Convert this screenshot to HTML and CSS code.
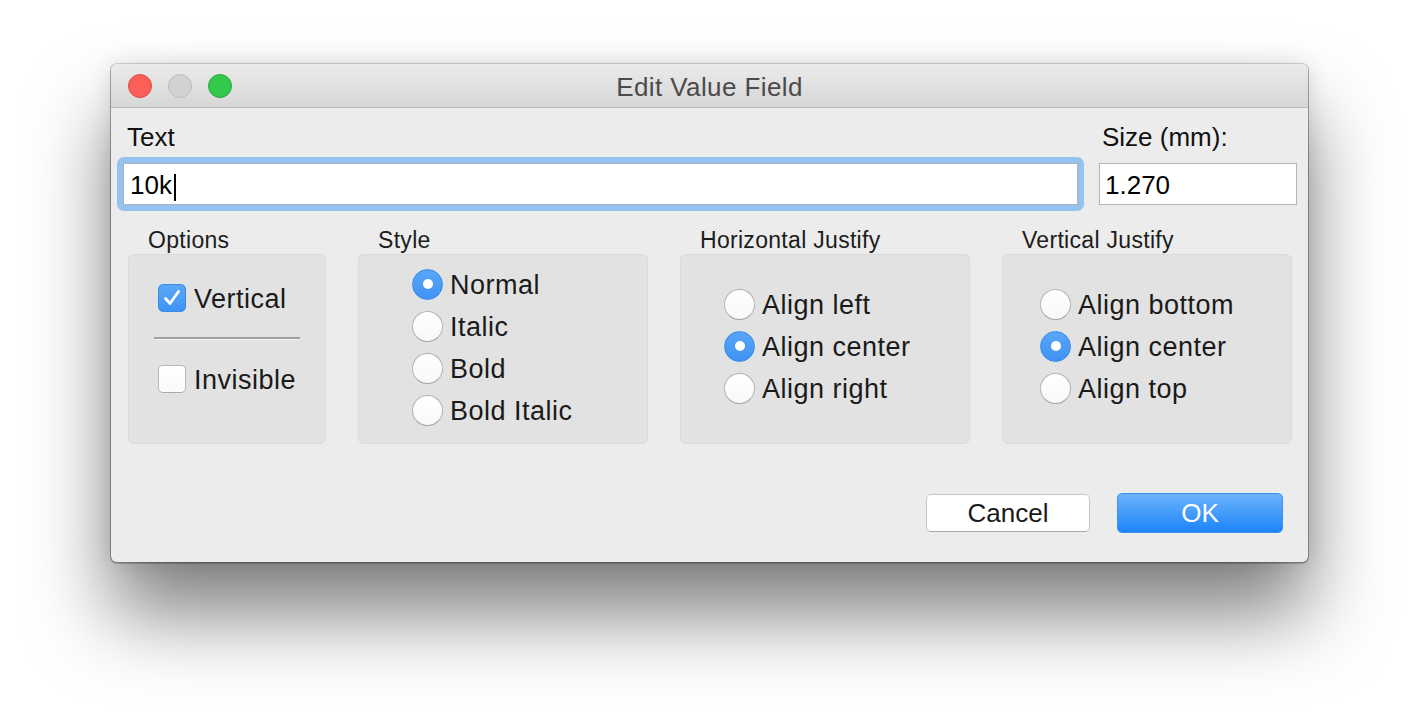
FILE: index.html
```html
<!DOCTYPE html>
<html lang="en">
<head>
<meta charset="utf-8">
<title>Edit Value Field</title>
<link rel="stylesheet" href="styles.css">
</head>
<body>
<div class="stage">
  <div class="window">
    <div class="titlebar">
      <div class="lights">
        <span class="light close"></span>
        <span class="light min"></span>
        <span class="light zoom"></span>
      </div>
      <div class="title">Edit Value Field</div>
      <div></div>
    </div>
    <div class="content">
      <div class="top-row">
        <div class="col-text">
          <div class="label text-label">Text</div>
          <div class="focus-ring">
            <div class="field">10k<span class="caret"></span></div>
          </div>
        </div>
        <div class="col-size">
          <div class="label size-label">Size (mm):</div>
          <div class="field size-field">1.270</div>
        </div>
      </div>

      <div class="groups">
        <div class="group g-options">
          <div class="group-label">Options</div>
          <div class="box">
            <div class="row"><span class="check on"><svg viewBox="0 0 28 28" width="28" height="28"><path d="M7.5 14.5 L12 19.5 L20.5 7.5" fill="none" stroke="#fff" stroke-width="2.8" stroke-linecap="round" stroke-linejoin="round"/></svg></span><span class="opt">Vertical</span></div>
            <div class="sep"></div>
            <div class="row"><span class="check"></span><span class="opt">Invisible</span></div>
          </div>
        </div>
        <div class="group g-style">
          <div class="group-label">Style</div>
          <div class="box">
            <div class="row"><span class="radio on"></span><span class="opt">Normal</span></div>
            <div class="row"><span class="radio"></span><span class="opt">Italic</span></div>
            <div class="row"><span class="radio"></span><span class="opt">Bold</span></div>
            <div class="row"><span class="radio"></span><span class="opt">Bold Italic</span></div>
          </div>
        </div>
        <div class="group g-hjust">
          <div class="group-label">Horizontal Justify</div>
          <div class="box">
            <div class="row"><span class="radio"></span><span class="opt">Align left</span></div>
            <div class="row"><span class="radio on"></span><span class="opt">Align center</span></div>
            <div class="row"><span class="radio"></span><span class="opt">Align right</span></div>
          </div>
        </div>
        <div class="group g-vjust">
          <div class="group-label">Vertical Justify</div>
          <div class="box">
            <div class="row"><span class="radio"></span><span class="opt">Align bottom</span></div>
            <div class="row"><span class="radio on"></span><span class="opt">Align center</span></div>
            <div class="row"><span class="radio"></span><span class="opt">Align top</span></div>
          </div>
        </div>
      </div>

      <div class="buttons">
        <div class="btn cancel">Cancel</div>
        <div class="btn ok">OK</div>
      </div>
    </div>
  </div>
</div>
</body>
</html>
```
FILE: styles.css
```css
html, body {
  margin: 0;
  padding: 0;
  background: #ffffff;
}
body {
  width: 1420px;
  height: 722px;
  overflow: hidden;
  font-family: "Liberation Sans", Arial, Helvetica, sans-serif;
  color: #1c1c1c;
}
.stage {
  padding: 64px 0 0 111px;
}
.window {
  width: 1197px;
  height: 498px;
  box-sizing: border-box;
  background: #ececec;
  border-radius: 6px;
  overflow: hidden;
  box-shadow: 0 0 0 1px rgba(0,0,0,0.16), 0 1px 0 1px rgba(0,0,0,0.18), 0 52px 80px 0 rgba(0,0,0,0.5), 0 0 22px rgba(0,0,0,0.12);
}
.titlebar {
  height: 43px;
  border-bottom: 1px solid #b8b8b8;
  background: linear-gradient(#ebebeb, #d6d6d6);
  display: grid;
  grid-template-columns: 1fr auto 1fr;
  align-items: center;
}
.lights {
  display: flex;
  gap: 16px;
  padding-left: 17px;
}
.light {
  width: 24px;
  height: 24px;
  border-radius: 50%;
  box-sizing: border-box;
}
.light.close { background: #fc5f57; border: 1px solid #e0443e; }
.light.min { background: #d2d2d2; border: 1px solid #bcbcbc; }
.light.zoom { background: #34c84a; border: 1px solid #26a73a; }
.title {
  font-size: 26px;
  letter-spacing: 0.4px;
  color: #4b4b4b;
  line-height: 30px;
  padding-top: 2px;
}

.content {
  padding: 14px 11px 0 6px;
}
.top-row {
  display: flex;
  gap: 15px;
  align-items: flex-start;
}
.col-text { flex: 1; }
.col-size { width: 198px; }
.label {
  font-size: 26px;
  line-height: 30px;
  color: #111;
}
.text-label { padding-left: 10px; }
.size-label { padding-left: 3px; }
.focus-ring {
  margin-top: 5px;
  padding: 6px;
  background: #96c2ef;
  border-radius: 7px;
}
.field {
  height: 42px;
  box-sizing: border-box;
  background: #fff;
  border: 1px solid #a9b4c0;
  font-size: 26px;
  line-height: 37px;
  padding: 3px 0 0 6px;
  color: #000;
  white-space: nowrap;
}
.size-field {
  margin-top: 11px;
  border-color: #b4b4b4;
  padding-left: 5px;
}
.caret {
  display: inline-block;
  width: 2px;
  height: 27px;
  background: #000;
  vertical-align: -7px;
  margin-left: 2px;
}

.groups {
  display: flex;
  gap: 32px;
  margin: 16px 0 0 11px;
}
.group-label {
  font-size: 23px;
  line-height: 26px;
  letter-spacing: 0.3px;
  padding-left: 20px;
  color: #1c1c1c;
}
.box {
  margin-top: 1px;
  height: 190px;
  box-sizing: border-box;
  background: #e2e2e2;
  border: 1px solid #dadada;
  border-radius: 6px;
}
.g-options .box { width: 198px; padding: 22px 0 0 29px; }
.g-style .box { width: 290px; padding: 8px 0 0 53px; }
.g-hjust .box { width: 290px; padding: 28px 0 0 43px; }
.g-vjust .box { width: 290px; padding: 28px 0 0 37px; }

.row {
  height: 42px;
  display: flex;
  align-items: center;
}
.opt {
  font-size: 27px;
  letter-spacing: 0.5px;
  line-height: 42px;
  margin-left: 7px;
  padding-top: 2px;
  color: #1a1a1a;
}
.check + .opt { margin-left: 8px; }
.sep {
  width: 146px;
  height: 2px;
  background: #9f9f9f;
  border-bottom: 1px solid #f4f4f4;
  margin: 18px 0 18px -4px;
}
.check {
  width: 28px;
  height: 28px;
  box-sizing: border-box;
  border-radius: 5px;
  background: linear-gradient(#ffffff, #fafafa);
  border: 1px solid #b9b9b9;
  border-bottom-color: #a9a9a9;
  display: block;
}
.check.on {
  background: linear-gradient(#5aa8f8, #3f93f5);
  border: 1px solid #3a8be8;
}
.check svg { display: block; margin: -1px; }
.radio {
  width: 31px;
  height: 31px;
  box-sizing: border-box;
  border-radius: 50%;
  background: linear-gradient(#ffffff, #f8f8f8);
  border: 1px solid #b4b4b4;
  border-bottom-color: #a4a4a4;
  display: flex;
  align-items: center;
  justify-content: center;
}
.radio.on {
  background: linear-gradient(#58a6f8, #3f93f5);
  border: 1px solid #3a8be8;
}
.radio.on::after {
  content: "";
  width: 10px;
  height: 10px;
  border-radius: 50%;
  background: #fff;
}

.buttons {
  display: flex;
  justify-content: flex-end;
  align-items: center;
  gap: 27px;
  margin-top: 49px;
  padding-right: 14px;
}
.btn {
  box-sizing: border-box;
  border-radius: 5px;
  font-size: 26px;
  text-align: center;
}
.cancel {
  width: 164px;
  height: 38px;
  line-height: 36px;
  background: #fff;
  border: 1px solid #c6c6c6;
  border-bottom-color: #a8a8a8;
  color: #1a1a1a;
}
.ok {
  width: 166px;
  height: 40px;
  line-height: 38px;
  background: linear-gradient(#6cb3fa, #1c84fb);
  border: 1px solid #3f8ff0;
  color: #fff;
}
```
